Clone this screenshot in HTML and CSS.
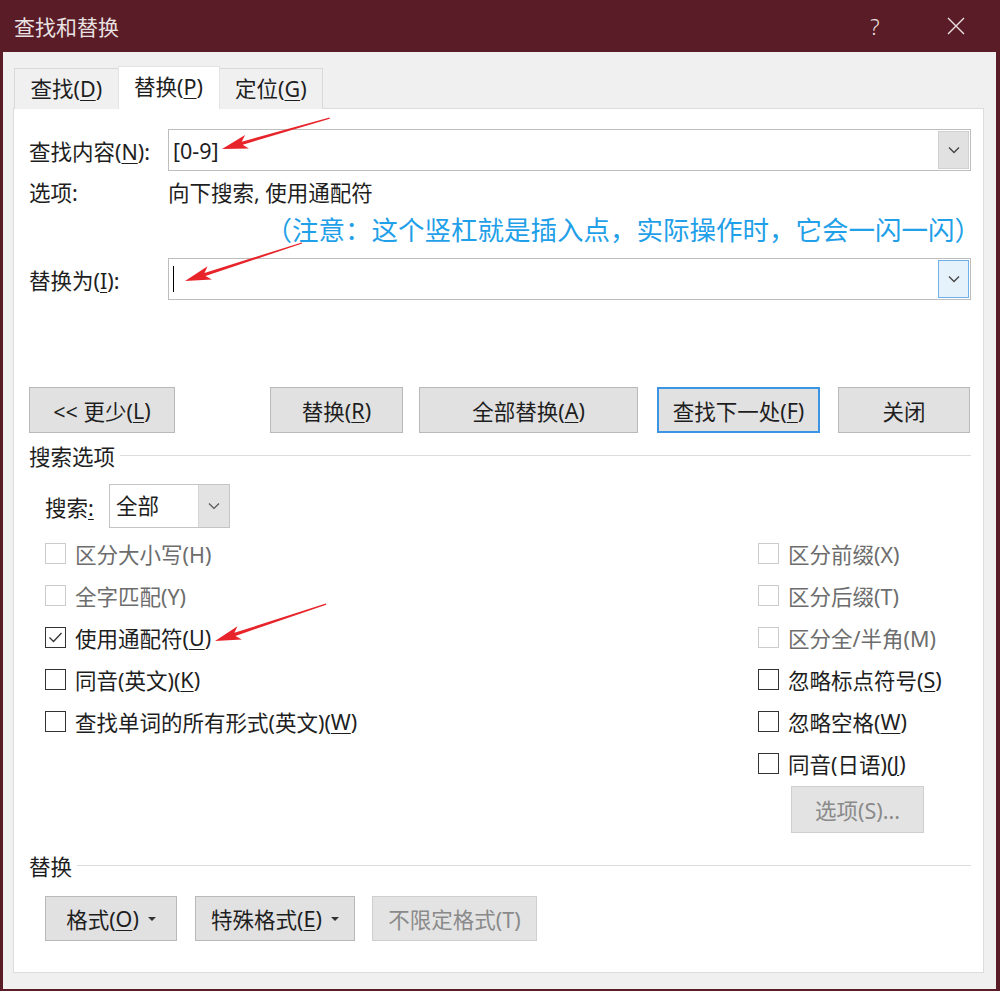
FILE: index.html
```html
<!DOCTYPE html>
<html lang="zh-CN">
<head>
    <meta charset="UTF-8">
    <meta name="viewport" content="width=device-width, initial-scale=1.0">
    <title>查找和替换</title>
    <link rel="stylesheet" href="styles.css">
</head>
<body>
    <div class="window">
        <div class="titlebar">
            <span class="title">查找和替换</span>
            <span class="tb-btn help">?</span>
            <span class="tb-btn close">
                <svg width="18" height="18" viewBox="0 0 18 18"><path d="M1 1 L17 17 M17 1 L1 17" stroke="#e9e1e2" stroke-width="1.4" fill="none"/></svg>
            </span>
        </div>

        <div class="client">
            <div class="tabs">
                <div class="tab">查找(<u>D</u>)</div>
                <div class="tab active">替换(<u>P</u>)</div>
                <div class="tab">定位(<u>G</u>)</div>
            </div>

            <div class="panel">
                <div class="field-row">
                    <span class="field-label">查找内容(<u>N</u>):</span>
                    <div class="combo">
                        <span class="combo-text">[0-9]</span>
                        <span class="combo-btn">
                            <svg width="12" height="8" viewBox="0 0 12 8"><polyline points="1,1.5 6,6.5 11,1.5" stroke="#444" stroke-width="1.3" fill="none"/></svg>
                        </span>
                    </div>
                </div>

                <div class="options-row">
                    <span class="field-label">选项:</span>
                    <span>向下搜索, 使用通配符</span>
                </div>

                <div class="note">（注意：这个竖杠就是插入点，实际操作时，它会一闪一闪）</div>

                <div class="field-row replace-row">
                    <span class="field-label">替换为(<u>I</u>):</span>
                    <div class="combo">
                        <span class="combo-text"><span class="caret"></span></span>
                        <span class="combo-btn hot">
                            <svg width="12" height="8" viewBox="0 0 12 8"><polyline points="1,1.5 6,6.5 11,1.5" stroke="#444" stroke-width="1.3" fill="none"/></svg>
                        </span>
                    </div>
                </div>

                <div class="button-row">
                    <button class="btn w-less">&lt;&lt; 更少(<u>L</u>)</button>
                    <button class="btn w-replace">替换(<u>R</u>)</button>
                    <button class="btn w-all">全部替换(<u>A</u>)</button>
                    <button class="btn btn-default w-next">查找下一处(<u>F</u>)</button>
                    <button class="btn w-close">关闭</button>
                </div>

                <div class="group-title">搜索选项</div>

                <div class="search-row">
                    <span class="search-label">搜索<u>:</u></span>
                    <div class="select">
                        <span class="select-text">全部</span>
                        <span class="select-btn">
                            <svg width="12" height="8" viewBox="0 0 12 8"><polyline points="1,1.5 6,6.5 11,1.5" stroke="#555" stroke-width="1.2" fill="none"/></svg>
                        </span>
                    </div>
                </div>

                <div class="checks">
                    <div class="col-left">
                        <div class="check disabled"><span class="box"></span>区分大小写(H)</div>
                        <div class="check disabled"><span class="box"></span>全字匹配(Y)</div>
                        <div class="check">
                            <span class="box">
                                <svg width="17" height="17" viewBox="0 0 17 17"><polyline points="2.5,8.5 6.5,12.5 14.5,4" stroke="#333" stroke-width="1.3" fill="none"/></svg>
                            </span>使用通配符(<u>U</u>)
                        </div>
                        <div class="check"><span class="box"></span>同音(英文)(<u>K</u>)</div>
                        <div class="check"><span class="box"></span>查找单词的所有形式(英文)(<u>W</u>)</div>
                    </div>
                    <div class="col-right">
                        <div class="check disabled"><span class="box"></span>区分前缀(X)</div>
                        <div class="check disabled"><span class="box"></span>区分后缀(T)</div>
                        <div class="check disabled"><span class="box"></span>区分全/半角(M)</div>
                        <div class="check"><span class="box"></span>忽略标点符号(<u>S</u>)</div>
                        <div class="check"><span class="box"></span>忽略空格(<u>W</u>)</div>
                        <div class="check"><span class="box"></span>同音(日语)(<u>J</u>)</div>
                        <button class="btn btn-disabled opt-btn" disabled>选项(S)...</button>
                    </div>
                </div>

                <div class="group-title second">替换</div>

                <div class="bottom-row">
                    <button class="btn w-format">格式(<u>O</u>)<span class="tri"></span></button>
                    <button class="btn w-special">特殊格式(<u>E</u>)<span class="tri"></span></button>
                    <button class="btn btn-disabled w-noformat" disabled>不限定格式(T)</button>
                </div>
            </div>
        </div>

        <!-- 红色标注箭头 -->
        <svg class="marks" width="1000" height="991" viewBox="0 0 1000 991">
            <g fill="#e8242b">
                <polygon transform="translate(222 149) rotate(-16)" points="0,0 26,-7 21,-1.6 112,-0.6 112,0.6 21,1.6 26,7"/>
                <polygon transform="translate(185 281) rotate(-18)" points="0,0 26,-7 21,-1.6 123,-0.6 123,0.6 21,1.6 26,7"/>
                <polygon transform="translate(215 641) rotate(-18.4)" points="0,0 26,-7 21,-1.6 117,-0.6 117,0.6 21,1.6 26,7"/>
            </g>
        </svg>
    </div>
</body>
</html>
```

FILE: styles.css
```css
* {
    box-sizing: border-box;
}

body {
    margin: 0;
    font-family: "Noto Sans", "Noto Sans CJK SC", sans-serif;
    font-size: 21.5px;
    color: #1e1e1e;
    background-color: #5a1c26;
}

u {
    text-decoration-thickness: 1px;
    text-underline-offset: 3px;
}

.window {
    position: relative;
    width: 1000px;
    height: 991px;
    display: flex;
    flex-direction: column;
    padding: 0 4px 2px 3px;
}

.titlebar {
    height: 52px;
    display: flex;
    align-items: center;
    color: #e9e1e2;
}

.title {
    flex: 1;
    padding-left: 11px;
    font-size: 21px;
}

.tb-btn {
    width: 60px;
    display: flex;
    justify-content: center;
    align-items: center;
}

.help {
    font-size: 22px;
    font-weight: 300;
    margin-right: 21px;
}

.close {
    margin-right: 10px;
}

.client {
    flex: 1;
    background-color: #f0f0f0;
    padding: 14px 12px 16px 10px;
    display: flex;
    flex-direction: column;
}

.tabs {
    display: flex;
    align-items: flex-end;
    height: 43px;
    margin-bottom: -1px;
    margin-left: 1px;
    position: relative;
    z-index: 1;
}

.tab {
    height: 41px;
    padding: 0 15.5px;
    line-height: 40px;
    border: 1px solid #d9d9d9;
    border-bottom: none;
    margin-right: -1px;
    background-color: #f0f0f0;
}

    .tab.active {
        height: 43px;
        background-color: #ffffff;
        border-color: #e3e3e3;
        position: relative;
        z-index: 1;
    }

.panel {
    flex: 1;
    background-color: #ffffff;
    border: 1px solid #dcdcdc;
    padding: 20px 12px 0 15px;
}

.field-row {
    display: flex;
    align-items: center;
    height: 42px;
}

.field-label {
    width: 139px;
    flex-shrink: 0;
}

.combo {
    flex: 1;
    height: 42px;
    border: 1px solid #bdbdbd;
    background-color: #ffffff;
    display: flex;
    align-items: center;
    padding-left: 4px;
}

.combo-text {
    flex: 1;
    display: flex;
    align-items: center;
}

.combo-btn {
    width: 31px;
    height: 38px;
    margin-right: 1px;
    background-color: #e1e1e1;
    border: 1px solid #d0d0d0;
    display: flex;
    align-items: center;
    justify-content: center;
}

    .combo-btn.hot {
        background-color: #e5f1fb;
        border-color: #6fb0ea;
    }

.caret {
    width: 1px;
    height: 26px;
    background-color: #000000;
}

.options-row {
    display: flex;
    margin-top: 7px;
    line-height: 30px;
}

.note {
    margin-top: 5px;
    margin-right: -10px;
    text-align: right;
    color: #1fa0e8;
    font-size: 26.5px;
    line-height: 34px;
}

.replace-row {
    margin-top: 11px;
}

.button-row {
    display: flex;
    margin-top: 87px;
}

.btn {
    height: 46px;
    padding: 0;
    background-color: #e1e1e1;
    border: 1px solid #b9b9b9;
    font-family: inherit;
    font-size: inherit;
    color: inherit;
    display: flex;
    align-items: center;
    justify-content: center;
    cursor: pointer;
}

.btn-default {
    border: 2px solid #3b94e4;
}

.btn-disabled {
    background-color: #e3e3e3;
    border-color: #cfcfcf;
    color: #8a8a8a;
    cursor: default;
}

.w-less { width: 146px; }
.w-replace { width: 133px; margin-left: 95px; }
.w-all { width: 219px; margin-left: 16px; }
.w-next { width: 163px; margin-left: 19px; }
.w-close { width: 132px; margin-left: 18px; }

.group-title {
    display: flex;
    align-items: center;
    margin-top: 9px;
    line-height: 30px;
}

    .group-title::after {
        content: "";
        flex: 1;
        margin-left: 5px;
        margin-top: -3px;
        border-top: 1px solid #dcdcdc;
    }

    .group-title.second {
        margin-top: 19px;
    }

.search-row {
    display: flex;
    align-items: center;
    margin-top: 12px;
    padding-left: 16px;
}

.search-label {
    width: 64px;
}

.select {
    width: 121px;
    height: 44px;
    border: 1px solid #c4c4c4;
    display: flex;
    background-color: #ffffff;
}

.select-text {
    flex: 1;
    padding-left: 6px;
    line-height: 42px;
}

.select-btn {
    width: 31px;
    background-color: #e3e3e3;
    border-left: 1px solid #d5d5d5;
    display: flex;
    align-items: center;
    justify-content: center;
}

.checks {
    display: flex;
    margin-top: 4px;
    padding-left: 16px;
}

.col-left {
    flex: 1;
}

.col-right {
    width: 213px;
}

.check {
    display: flex;
    align-items: center;
    height: 42px;
    white-space: nowrap;
}

.box {
    width: 21px;
    height: 21px;
    border: 1px solid #333333;
    background-color: #ffffff;
    margin-right: 9px;
    display: flex;
    align-items: center;
    justify-content: center;
}

.check.disabled {
    color: #6d6d6d;
}

    .check.disabled .box {
        border-color: #cccccc;
    }

.opt-btn {
    width: 133px;
    height: 47px;
    margin-top: 2px;
    margin-left: 33px;
}

.bottom-row {
    display: flex;
    margin-top: 14px;
    padding-left: 16px;
}

    .bottom-row .btn {
        height: 45px;
    }

.w-format { width: 132px; }
.w-special { width: 160px; margin-left: 18px; }
.w-noformat { width: 165px; margin-left: 17px; }

.tri {
    width: 0;
    height: 0;
    margin-left: 9px;
    border-left: 4px solid transparent;
    border-right: 4px solid transparent;
    border-top: 4px solid #333333;
}

.marks {
    position: absolute;
    top: 0;
    left: 0;
    pointer-events: none;
}
```
